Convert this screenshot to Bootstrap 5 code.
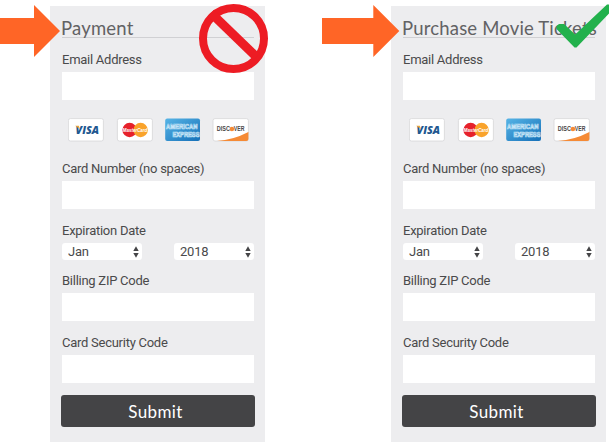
<!DOCTYPE html>
<html lang="en">
<head>
<meta charset="utf-8">
<meta name="viewport" content="width=device-width, initial-scale=1">
<title>Payment forms</title>
<link href="https://cdn.jsdelivr.net/npm/bootstrap@5.3.0/dist/css/bootstrap.min.css" rel="stylesheet">
<style>
body { background: #fff; font-family: Roboto, sans-serif; color: #4a4a4b; height: 442px; overflow: hidden; }
.pay-panel { width: 215px; height: 436px; margin-top: 6px; padding: 10px 11px 0 12px; background: #ededef; }
.panel-a { margin-left: 50px; }
.panel-b { margin-left: 126px; }
.pay-title { font: 400 18.5px/24px Lato, sans-serif; letter-spacing: .2px; color: #626264; height: 21px; margin: 0 0 0 -1px; white-space: nowrap; }
.panel-b .pay-title { letter-spacing: .18px; }
.pay-rule { height: 1px; background: #d0d0d3; width: 192px; margin-bottom: 13px; }
.pay-label { display: block; font-size: 13px; line-height: 18px; height: 16px; margin: 0 0 5px; white-space: nowrap; letter-spacing: -.26px; }
.pay-input { height: 28px; width: 192px; border: 0; border-radius: 0; padding: 4px 8px; background: #fff; }
.brands { margin: 18px 0 18px 5.5px; width: 181px; height: 24px; }
.date-row { gap: 32px; }
.mt-exp { margin-top: 13px; }
.mt-zip { margin-top: 12px; }
.mt-code { margin-top: 13px; }
.pay-select { width: 80px; height: 17px; min-height: 0; border: 0; border-radius: 3px; padding: 0 16px 0 6px; font-size: 13px; line-height: 17px; color: #4a4a4b; letter-spacing: -.2px;
  background: #fff url("data:image/svg+xml,%3Csvg xmlns='http://www.w3.org/2000/svg' viewBox='0 0 6 12'%3E%3Cpath d='M3 .3 5.7 5H.3zM3 11.7 5.7 7H.3z' fill='%23454547'/%3E%3C/svg%3E") no-repeat right 3px center / 6px 12px; }
.pay-submit { width: 194px; height: 32px; margin: 12px 0 0 -1px; padding: 0 5px 0 0; border: 0; border-radius: 3px; background: #444446; color: #fff; font: 400 17px/31px Lato, sans-serif; letter-spacing: .4px; }
.overlay { left: 0; top: 0; pointer-events: none; }
</style>
<script src="https://cdn.jsdelivr.net/npm/bootstrap@5.3.0/dist/js/bootstrap.bundle.min.js"></script>
</head>
<body class="position-relative">
<main class="d-flex">
  <form class="pay-panel panel-a flex-shrink-0">
    <h1 class="pay-title">Payment</h1>
    <div class="pay-rule"></div>
    <label class="pay-label" for="emailA">Email Address</label>
    <input class="form-control pay-input" id="emailA" type="email">
    <svg class="brands d-block" viewBox="0 0 181 24" role="img" aria-label="Accepted cards">
      <defs>
        <linearGradient id="amexFill" x1="0" y1="0" x2="1" y2="1"><stop offset="0" stop-color="#56b4e6"/><stop offset="1" stop-color="#1670b8"/></linearGradient>
      </defs>
      <g id="brandArt">
        <g fill="#fff" stroke="#d6d6d8" stroke-width=".8">
          <rect x=".4" y=".6" width="35" height="22.4" rx="2"/>
          <rect x="49.4" y=".6" width="35" height="22.4" rx="2"/>
          <rect x="145" y=".6" width="35.4" height="22.4" rx="2"/>
        </g>
        <text x="7.6" y="15.8" font-family="Open Sans, sans-serif" font-size="11" font-weight="800" font-style="italic" fill="#21578f" textLength="23.5" lengthAdjust="spacingAndGlyphs">VISA</text>
        <path d="M7.200 7.700h3.600l1 3.400z" fill="#e9a63a"/>
        <circle cx="61.6" cy="12" r="7.2" fill="#e6212b"/>
        <circle cx="72.6" cy="12" r="7.2" fill="#f9a32b"/>
        <text x="54.8" y="14" font-family="Liberation Sans, sans-serif" font-size="5.6" font-weight="700" font-style="italic" fill="#fff" textLength="24.5" lengthAdjust="spacingAndGlyphs">MasterCard</text>
        <rect x="97.2" y=".6" width="34.8" height="22.4" rx="2" fill="url(#amexFill)"/>
        <g font-family="Liberation Sans, sans-serif" font-size="6.5" font-weight="700" fill="#2b83c5" stroke="#c4e4f7" stroke-width=".7">
          <text x="98" y="11.4" textLength="31.5" lengthAdjust="spacingAndGlyphs">AMERICAN</text>
          <text x="104.5" y="18.6" textLength="27" lengthAdjust="spacingAndGlyphs">EXPRESS</text>
        </g>
        <path d="M180.400 14v7q0 2-2 2H149q16-1 31.400-9z" fill="#f58a35"/>
        <g font-family="Liberation Sans, sans-serif" font-size="6.4" font-weight="700" fill="#4b4747">
          <text x="148.8" y="13.2" textLength="13.2" lengthAdjust="spacingAndGlyphs">DISC</text>
          <text x="165.8" y="13.2" textLength="10.6" lengthAdjust="spacingAndGlyphs">VER</text>
        </g>
        <circle cx="163.900" cy="11" r="2.300" fill="#f58a35"/>
      </g>
    </svg>
    <label class="pay-label" for="cardA">Card Number (no spaces)</label>
    <input class="form-control pay-input" id="cardA">
    <label class="pay-label mt-exp" for="monthA">Expiration Date</label>
    <div class="d-flex date-row">
      <select class="form-select pay-select" id="monthA"><option>Jan</option></select>
      <select class="form-select pay-select" aria-label="Year"><option>2018</option></select>
    </div>
    <label class="pay-label mt-zip" for="zipA">Billing ZIP Code</label>
    <input class="form-control pay-input" id="zipA">
    <label class="pay-label mt-code" for="codeA">Card Security Code</label>
    <input class="form-control pay-input" id="codeA">
    <button class="btn pay-submit d-block" type="button">Submit</button>
  </form>

  <form class="pay-panel panel-b flex-shrink-0">
    <h1 class="pay-title">Purchase Movie Tickets</h1>
    <div class="pay-rule"></div>
    <label class="pay-label" for="emailB">Email Address</label>
    <input class="form-control pay-input" id="emailB" type="email">
    <svg class="brands d-block" viewBox="0 0 181 24" role="img" aria-label="Accepted cards"><use href="#brandArt"/></svg>
    <label class="pay-label" for="cardB">Card Number (no spaces)</label>
    <input class="form-control pay-input" id="cardB">
    <label class="pay-label mt-exp" for="monthB">Expiration Date</label>
    <div class="d-flex date-row">
      <select class="form-select pay-select" id="monthB"><option>Jan</option></select>
      <select class="form-select pay-select" aria-label="Year"><option>2018</option></select>
    </div>
    <label class="pay-label mt-zip" for="zipB">Billing ZIP Code</label>
    <input class="form-control pay-input" id="zipB">
    <label class="pay-label mt-code" for="codeB">Card Security Code</label>
    <input class="form-control pay-input" id="codeB">
    <button class="btn pay-submit d-block" type="button">Submit</button>
  </form>
</main>

<svg class="overlay position-absolute" width="609" height="80" aria-hidden="true">
  <g fill="#ff6526">
    <path d="M0 18H34V5L60 31 34 57V44H0z"/>
    <path d="M322 18H373.300V5L399.300 31 373.300 57V44H322z"/>
  </g>
  <g fill="none" stroke="#ed1c24" stroke-width="8">
    <circle cx="233.500" cy="38.500" r="30.500"/>
    <path d="M211 13L256.500 57" stroke-width="9"/>
  </g>
  <path d="M556.500 29V26L559 24H564L575.200 34.500 607 4.500H609V13.500L576.500 47.500H574.500z" fill="#22b14c"/>
</svg>
</body>
</html>
